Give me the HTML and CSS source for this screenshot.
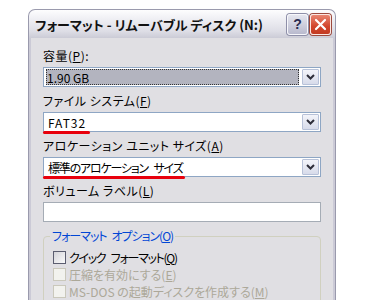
FILE: index.html
```html
<!DOCTYPE html>
<html lang="ja">
<head>
<meta charset="utf-8">
<title>フォーマット</title>
<link rel="stylesheet" href="styles.css">
</head>
<body>
<div class="window">
  <div class="titlebar">
    <span class="title">フォーマット - リムーバブル ディスク (N:)</span>
    <div class="tbtns">
      <span class="btn help">?</span>
      <span class="btn close"><svg width="13" height="13" viewBox="0 0 13 13"><path d="M2 2 L11 11 M11 2 L2 11" stroke="#fff" stroke-width="2.2" stroke-linecap="round"/></svg></span>
    </div>
  </div>
  <div class="client">
    <div class="field">
      <div class="label">容量(<u>P</u>):</div>
      <div class="combo">
        <div class="value sel"><span>1.90 GB</span></div>
        <div class="drop"><svg width="9" height="6" viewBox="0 0 9 6"><path d="M1 1 L4.5 4.5 L8 1" fill="none" stroke="#2e2e3a" stroke-width="2"/></svg></div>
      </div>
    </div>
    <div class="field">
      <div class="label">ファイル システム(<u>F</u>)</div>
      <div class="combo">
        <div class="value mono">FAT32</div>
        <div class="drop"><svg width="9" height="6" viewBox="0 0 9 6"><path d="M1 1 L4.5 4.5 L8 1" fill="none" stroke="#2e2e3a" stroke-width="2"/></svg></div>
      </div>
      <span class="mark mark-fat"></span>
    </div>
    <div class="field">
      <div class="label">アロケーション ユニット サイズ(<u>A</u>)</div>
      <div class="combo">
        <div class="value narrow">標準のアロケーション サイズ</div>
        <div class="drop"><svg width="9" height="6" viewBox="0 0 9 6"><path d="M1 1 L4.5 4.5 L8 1" fill="none" stroke="#2e2e3a" stroke-width="2"/></svg></div>
      </div>
      <span class="mark mark-alloc"></span>
    </div>
    <div class="field">
      <div class="label">ボリューム ラベル(<u>L</u>)</div>
      <div class="textbox"></div>
    </div>
    <fieldset class="group">
      <legend>フォーマット オプション(<u>O</u>)</legend>
      <div class="check tight"><span class="box"></span><span>クイック フォーマット(<u>Q</u>)</span></div>
      <div class="check disabled"><span class="box"></span><span>圧縮を有効にする(<u>E</u>)</span></div>
      <div class="check disabled"><span class="box"></span><span>MS-DOS の起動ディスクを作成する(<u>M</u>)</span></div>
    </fieldset>
  </div>
</div>
</body>
</html>
```
FILE: styles.css
```css
body {
  margin: 0;
  background: #fff;
  font-family: "Noto Sans CJK JP", sans-serif;
  color: #000;
}
.window {
  margin: 9px 0 0 28px;
  width: 308px;
}
.titlebar {
  height: 29px;
  box-sizing: border-box;
  border: 1px solid #9a9aad;
  border-bottom: none;
  border-radius: 7px 7px 0 0;
  background: linear-gradient(#fdfdfe, #eeeef3 35%, #dedee6 75%, #cbcbd6);
  display: flex;
  align-items: center;
  padding: 0 4px 0 6px;
}
.title {
  flex: 1;
  font-size: 13px;
  font-weight: bold;
  color: #111;
  font-feature-settings: "palt" 1;
  white-space: nowrap;
}
.tbtns {
  display: flex;
  gap: 2px;
}
.btn {
  width: 21px;
  height: 21px;
  box-sizing: border-box;
  border-radius: 3px;
  display: flex;
  align-items: center;
  justify-content: center;
}
.help {
  background: linear-gradient(#e4e5ee, #b9bace);
  border: 1px solid #f7f7fb;
  box-shadow: 0 0 0 1px #8e8fa8;
  color: #2a2c50;
  font-size: 14px;
  font-weight: bold;
  font-family: "Liberation Sans", sans-serif;
}
.close {
  background: linear-gradient(#e98672, #d2452b 60%, #c23a22);
  border: 1px solid #fbe7e2;
  box-shadow: 0 0 0 1px #9c4a3e;
}
.client {
  background: #e0dfe3;
  border-left: 1px solid #9a9aad;
  border-right: 1px solid #9a9aad;
  box-shadow: inset 2px 0 #cbcad6, inset -2px 0 #cbcad6;
  padding: 10px 14px 0 14px;
  height: 262px;
}
.field {
  position: relative;
  margin-bottom: 6px;
}
.label {
  height: 16px;
  line-height: 16px;
  font-size: 12px;
  margin-bottom: 3px;
  white-space: nowrap;
  letter-spacing: 0.5px;
  font-feature-settings: "palt" 1;
}
.combo {
  height: 20px;
  box-sizing: border-box;
  border: 1px solid #8ea6c4;
  background: #fff;
  display: flex;
  padding: 1px;
}
.value {
  flex: 1;
  display: flex;
  align-items: center;
  font-size: 12px;
  padding-left: 3px;
  white-space: pre;
  font-feature-settings: "palt" 1;
}
.value.sel {
  background: #b3b4bf;
  outline: 1px dotted #333;
  outline-offset: -1px;
  margin: 0 3px 0 1px;
  padding-left: 1px;
}
.value.mono {
  letter-spacing: 1px;
}
.value.narrow {
  letter-spacing: -1.2px;
  word-spacing: 4px;
}
.drop {
  width: 17px;
  box-sizing: border-box;
  border: 1px solid #b7c1d8;
  border-radius: 1px;
  background: linear-gradient(#f3f4fa, #d7dbea);
  display: flex;
  align-items: center;
  justify-content: center;
}
.textbox {
  height: 20px;
  box-sizing: border-box;
  border: 1px solid #a5acb5;
  background: #fff;
}
.mark {
  position: absolute;
  left: 0;
  top: 38px;
  height: 3px;
  border-radius: 2px;
  background: #e8000c;
}
.mark-fat { width: 47px; }
.mark-alloc { width: 142px; }
.group {
  margin: 0;
  border: 1px solid #d0d0bf;
  border-radius: 4px;
  padding: 5px 0 10px 9px;
}
.group legend {
  margin-left: -3px;
  padding: 0 2px;
  height: 16px;
  line-height: 16px;
  font-size: 12px;
  color: #0046d5;
  letter-spacing: -1px;
  word-spacing: 3px;
  font-feature-settings: "palt" 1;
}
.check {
  display: flex;
  align-items: center;
  height: 17px;
  font-size: 12px;
  gap: 3px;
  white-space: pre;
  font-feature-settings: "palt" 1;
}
.check.tight {
  letter-spacing: -1.3px;
  word-spacing: 4px;
}
.box {
  width: 13px;
  height: 13px;
  box-sizing: border-box;
  border: 1px solid #5b5d70;
  background: linear-gradient(135deg, #d4d4da, #fafafb);
}
.check.disabled {
  color: #aca899;
}
.check.disabled .box {
  border-color: #cac8bb;
  background: #f2f2ee;
}
```
